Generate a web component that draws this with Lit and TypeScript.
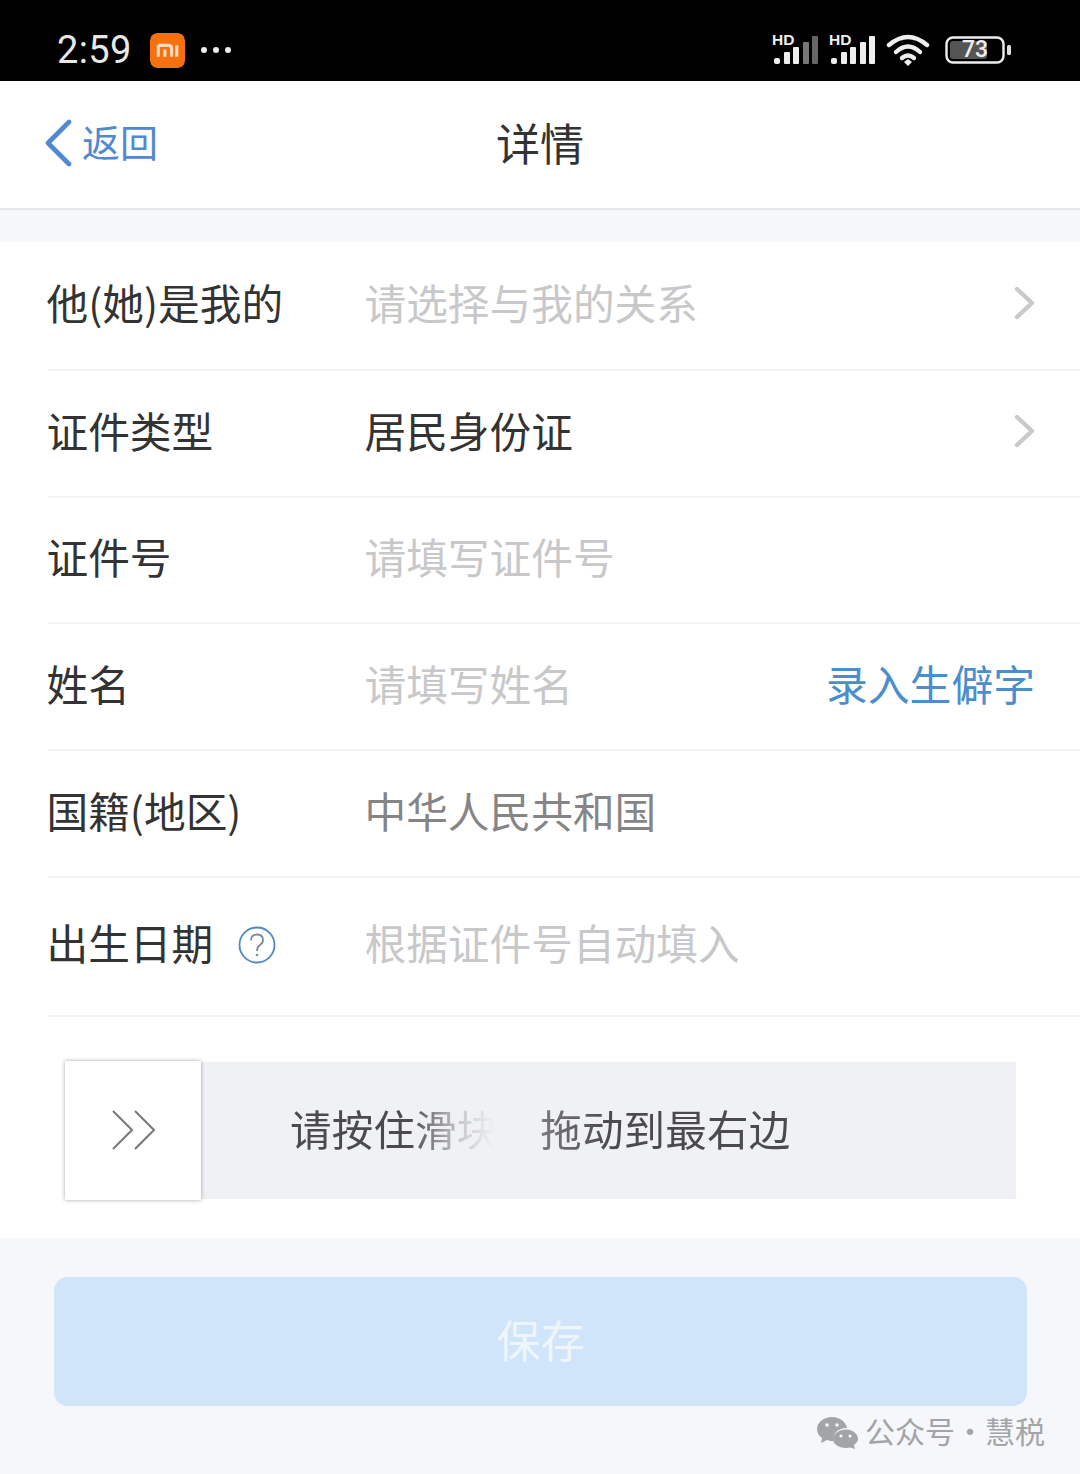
import { LitElement, html, css, svg } from "lit";
import { customElement } from "lit/decorators.js";

const chevron = html`<svg class="chev" width="22" height="34" viewBox="0 0 22 34"><path d="M3 3 L18 17 L3 31" fill="none" stroke="#c9c9cb" stroke-width="4.4" stroke-linecap="round" stroke-linejoin="round"/></svg>`;

const bars = (dim: boolean) => svg`
  <rect x="2" y="24" width="6" height="6" rx="2" fill="#eee"/>
  <rect x="12" y="18" width="6" height="12" rx="1" fill="#eee"/>
  <rect x="21" y="13" width="6" height="17" rx="1" fill="#eee"/>
  <rect x="31" y="8" width="6" height="22" rx="1" fill="${dim ? "#777" : "#eee"}"/>
  <rect x="40" y="2" width="6" height="28" rx="1" fill="${dim ? "#666" : "#eee"}"/>`;

@customElement("app-root")
export class AppRoot extends LitElement {
  static styles = css`
    :host {
      display: block;
      width: 1080px;
      height: 1474px;
      overflow: hidden;
      background: #f5f7fb;
      font-family: "Noto Sans CJK SC", "Liberation Sans", sans-serif;
    }
    .status {
      height: 81px;
      box-sizing: border-box;
      background: #000;
      display: flex;
      align-items: center;
      padding: 19px 69px 0 57px;
      color: #e8e8e8;
    }
    .time {
      font-family: Roboto, "Liberation Sans", sans-serif;
      font-size: 38px;
      width: 93px;
      letter-spacing: 0.4px;
    }
    .mi {
      width: 35px;
      height: 35px;
      border-radius: 7px;
      display: block;
    }
    .dots {
      display: flex;
      gap: 6px;
      margin-left: 16px;
    }
    .dots i {
      width: 6px;
      height: 6px;
      border-radius: 50%;
      background: #eee;
    }
    .status-right {
      margin-left: auto;
      display: flex;
      align-items: center;
      gap: 11px;
    }
    .sig {
      position: relative;
      width: 46px;
      height: 32px;
      display: block;
    }
    .hd {
      position: absolute;
      left: 0;
      top: -2px;
      font: 700 15.5px/16px "Liberation Sans", sans-serif;
      color: #eee;
    }
    .sigwrap {
      position: relative;
      width: 46px;
      height: 32px;
    }
    .batt {
      position: relative;
      width: 66px;
      height: 28px;
      margin-left: 4px;
    }
    .batt span {
      position: absolute;
      left: 0;
      width: 60px;
      top: 0;
      text-align: center;
      font: 500 23px/27px Roboto, sans-serif;
      color: #eee;
    }
    .nav {
      height: 129px;
      box-sizing: border-box;
      background: #fff;
      border-bottom: 2px solid #e6e7e9;
      padding-bottom: 6px;
      display: grid;
      grid-template-columns: 1fr auto 1fr;
      align-items: center;
    }
    .back {
      display: flex;
      align-items: center;
      gap: 9px;
      padding-left: 44px;
      color: #5089d1;
      font-size: 38px;
      line-height: 44px;
    }
    .back svg {
      margin-top: 2px;
    }
    .back span {
      margin-bottom: 2px;
    }
    .title {
      font-size: 44px;
      color: #333;
      line-height: 50px;
    }
    .gap {
      height: 32px;
    }
    .form {
      background: #fff;
      height: 996px;
      padding-left: 48px;
      box-sizing: border-box;
    }
    .row {
      display: flex;
      align-items: center;
      border-bottom: 2px solid #f3f3f4;
      box-sizing: border-box;
      font-size: 41.7px;
      line-height: 50px;
      padding-right: 45px;
      padding-bottom: 8px;
      color: #333;
    }
    .last {
      padding-bottom: 10px;
    }
    .label {
      width: 318px;
      flex: none;
      display: flex;
      align-items: center;
      gap: 25px;
      margin-left: -1.5px;
    }
    .ph {
      color: #c8c8ca;
    }
    .muted {
      color: #858587;
    }
    .chev {
      margin-left: auto;
      margin-top: 2px;
      margin-right: -1px;
    }
    .link {
      margin-left: auto;
      color: #4a8ed0;
      font-size: 41.8px;
    }
    .help {
      margin-top: 6px;
    }
    .slider-wrap {
      padding: 45px 0 0 17px;
    }
    .slider {
      width: 951px;
      height: 137px;
      background: #eff1f5;
      display: flex;
      align-items: center;
      position: relative;
    }
    .handle {
      width: 136px;
      height: 139px;
      flex: none;
      background: #fff;
      box-shadow: 0 0 4px rgba(0, 0, 0, 0.35);
      display: flex;
      align-items: center;
      justify-content: center;
    }
    .handle svg {
      margin-bottom: 2px;
      margin-left: 1px;
    }
    .slide-text {
      margin-left: 89px;
      margin-bottom: 6px;
      font-size: 41.5px;
      letter-spacing: 0.2px;
      line-height: 50px;
      white-space: nowrap;
      color: transparent;
      background: linear-gradient(
        90deg,
        #4b4b4d 0,
        #4b4b4d 120px,
        #c9c9cb 170px,
        #eff1f5 205px,
        #eff1f5 225px,
        #77777a 255px,
        #4b4b4d 320px
      );
      -webkit-background-clip: text;
      background-clip: text;
    }
    .footer {
      height: 236px;
      padding: 39px 53px 0 54px;
      box-sizing: border-box;
      position: relative;
    }
    .save {
      height: 129px;
      box-sizing: border-box;
      padding-bottom: 6px;
      border-radius: 14px;
      background: #d0e5f9;
      color: #eef5fc;
      font-size: 44px;
      display: flex;
      align-items: center;
      justify-content: center;
    }
    .mark {
      position: absolute;
      left: 817px;
      top: 172px;
      display: flex;
      align-items: center;
      gap: 7px;
      color: #a3a4a6;
      font-size: 30px;
      line-height: 40px;
      white-space: nowrap;
    }
    .mark svg {
      margin-top: 4px;
    }
  `;

  private row(height: number, label: unknown, value: unknown, tail: unknown = null, last = false) {
    return html`<div class="row ${last ? "last" : ""}" style="height:${height}px">
      <div class="label">${label}</div>
      ${value}${tail}
    </div>`;
  }

  render() {
    return html`
      <div class="status">
        <div class="time">2:59</div>
        <svg class="mi" viewBox="0 0 34 34">
          <rect width="34" height="34" rx="7" fill="#f5700f"/>
          <path d="M8 12 H18 Q21 12 21 15 V23 M8 12 V23 M14.500 16 V23 M26 12 V23" fill="none" stroke="#fbdcc0" stroke-width="3"/>
        </svg>
        <div class="dots"><i></i><i></i><i></i></div>
        <div class="status-right">
          <div class="sigwrap"><svg class="sig" viewBox="0 0 46 32">${bars(true)}</svg><span class="hd">HD</span></div>
          <div class="sigwrap"><svg class="sig" viewBox="0 0 46 32">${bars(false)}</svg><span class="hd">HD</span></div>
          <svg width="44" height="32" viewBox="0 0 44 32">
            <g fill="none" stroke="#eee" stroke-width="4.4" stroke-linecap="round">
              <path d="M3 11 Q22 -5 41 11"/>
              <path d="M10 18 Q22 7 34 18"/>
              <path d="M16 24 Q22 19 28 24"/>
            </g>
            <path d="M18 28 L22 25 L26 28 L22 32 Z" fill="#eee"/>
          </svg>
          <div class="batt">
            <svg width="66" height="28" viewBox="0 0 66 28">
              <rect x="1.5" y="1.5" width="57" height="25" rx="6.5" fill="none" stroke="#eee" stroke-width="2.4"/>
              <rect x="5" y="5" width="37" height="18" rx="3" fill="#555"/>
              <rect x="62" y="9" width="4" height="10" rx="1.5" fill="#ddd"/>
            </svg>
            <span>73</span>
          </div>
        </div>
      </div>

      <div class="nav">
        <div class="back">
          <svg width="29" height="48" viewBox="0 0 29 48"><path d="M25 3 L4 24 L25 45" fill="none" stroke="#5089d1" stroke-width="4.6" stroke-linecap="round" stroke-linejoin="round"/></svg>
          <span>返回</span>
        </div>
        <div class="title">详情</div>
        <div></div>
      </div>

      <div class="gap"></div>

      <div class="form">
        ${this.row(129, "他(她)是我的", html`<span class="ph">请选择与我的关系</span>`, chevron)}
        ${this.row(127, "证件类型", html`<span>居民身份证</span>`, chevron)}
        ${this.row(126, "证件号", html`<span class="ph">请填写证件号</span>`)}
        ${this.row(127, "姓名", html`<span class="ph">请填写姓名</span>`, html`<span class="link">录入生僻字</span>`)}
        ${this.row(127, "国籍(地区)", html`<span class="muted">中华人民共和国</span>`)}
        ${this.row(139, html`<span>出生日期</span>
          <svg class="help" width="38" height="38" viewBox="0 0 38 38">
            <circle cx="19" cy="19" r="17.5" fill="none" stroke="#5089c4" stroke-width="1.8"/>
            <path d="M13 14.5 Q13 8.5 19 8.5 Q25 8.5 25 14 Q25 17 22 19 Q19 21 19 25" fill="none" stroke="#7d8b99" stroke-width="1.8"/>
            <circle cx="19" cy="29" r="1.3" fill="#7d8b99"/>
          </svg>`, html`<span class="ph">根据证件号自动填入</span>`, null, true)}
        <div class="slider-wrap">
          <div class="slider">
            <div class="handle">
              <svg width="46" height="40" viewBox="0 0 46 40"><path d="M2 1 L21 20 L2 39 M24 1 L43 20 L24 39" fill="none" stroke="#777" stroke-width="2"/></svg>
            </div>
            <div class="slide-text">请按住滑块，拖动到最右边</div>
          </div>
        </div>
      </div>

      <div class="footer">
        <div class="save">保存</div>
        <div class="mark">
          <svg width="41" height="33" viewBox="0 0 41 33">
            <path d="M15 1 C7 1 0 6 0 13 C0 17 2 20 5 22 L4 27 L10 24 C11 24.300 13 25 15 25 C15.500 25 16 25 16.500 24.900 C15 19 20 12 30 12 C29 6 23 1 15 1 Z" fill="#a3a4a6"/>
            <path d="M29 13.500 C22 13.500 16 18 16 23 C16 28 22 32 29 32 C30 32 32 31.800 33 31.500 L38 33 L37 29 C39.500 27 41 25 41 23 C41 18 36 13.500 29 13.500 Z" fill="#a3a4a6"/>
            <circle cx="10" cy="9" r="1.800" fill="#f5f7fb"/><circle cx="20" cy="9" r="1.800" fill="#f5f7fb"/>
            <circle cx="24" cy="20" r="1.600" fill="#f5f7fb"/><circle cx="33" cy="20" r="1.600" fill="#f5f7fb"/>
          </svg>
          <span>公众号·慧税</span>
        </div>
      </div>
    `;
  }
}
